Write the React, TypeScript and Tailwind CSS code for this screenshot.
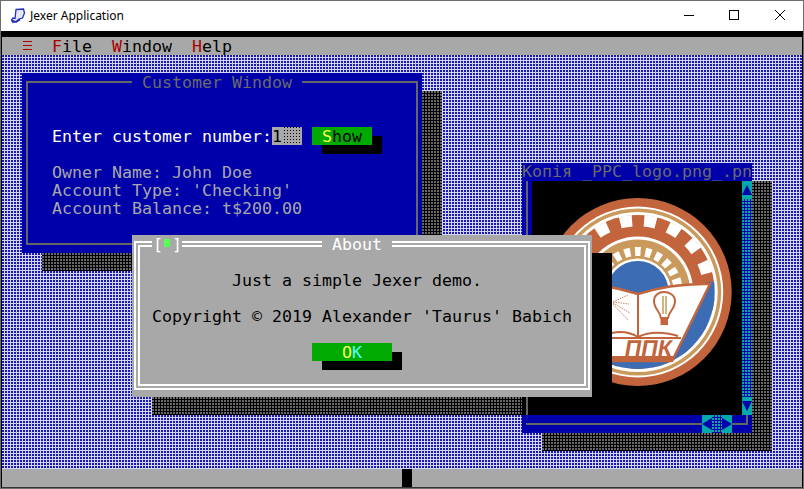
const mono = "font-['DejaVu_Sans_Mono',monospace] text-[16.61px] leading-[20px] whitespace-pre";
const desktopBg = 'bg-[conic-gradient(at_2px_2px,#d4d4f4_75%,#1818b4_0)] bg-[length:3px_3px]';
const shadowBg = 'bg-[conic-gradient(at_2px_2px,#000000_75%,#686868_0)] bg-[length:3px_3px]';
const fieldBg = 'bg-[conic-gradient(at_1px_1px,#a8a8a8_75%,#000000_0)] bg-[length:3px_3px]';
const trackBg = 'bg-[conic-gradient(at_2px_2px,#0000aa_75%,#00aaaa_0)] bg-[length:3px_3px]';

function Arrow({ dir }: { dir: 'up' | 'down' | 'left' | 'right' }) {
  const points = {
    up: '5,4 10,14 0,14',
    down: '0,4 10,4 5,14',
    left: '0,9 10,3 10,15',
    right: '10,9 0,3 0,15',
  }[dir];
  return (
    <svg width="10" height="18" viewBox="0 0 10 18" className="block bg-[#00aaaa] shrink-0">
      <polygon points={points} fill="#0000aa" />
    </svg>
  );
}

function Logo() {
  const orange = '#c2653d';
  const tan = '#c99a5b';
  const blue = '#3b6cb4';
  return (
    <svg width="210" height="234" viewBox="532 181 210 234" className="block">
      <defs>
        <clipPath id="innerDisc">
          <circle cx="637.7" cy="292" r="77" />
        </clipPath>
      </defs>
      <circle cx="637.7" cy="292" r="94" fill={orange} />
      <circle cx="637.7" cy="292" r="85.5" fill="#ffffff" />
      <circle cx="637.7" cy="292" r="83.5" fill={tan} />
      <circle cx="637.7" cy="292" r="80" fill="#ffffff" />
      <circle cx="637.7" cy="292" r="77" fill={orange} />
      {/* gear gaps */}
      <circle
        cx="637.7"
        cy="292"
        r="71.5"
        fill="none"
        stroke="#ffffff"
        strokeWidth="11.5"
        strokeDasharray="12 12.96"
        strokeDashoffset="-6.5"
        transform="rotate(-90 637.7 292)"
      />
      <circle cx="637.7" cy="292" r="55.5" fill="#ffffff" />
      <circle cx="637.7" cy="292" r="52.5" fill={tan} />
      <circle
        cx="637.7"
        cy="292"
        r="40.5"
        fill="none"
        stroke="#ffffff"
        strokeWidth="9"
        strokeDasharray="6 4.6"
        strokeDashoffset="3"
        transform="rotate(-90 637.7 292)"
      />
      <circle cx="637.7" cy="292" r="33.5" fill="#ffffff" />
      <circle cx="637.7" cy="292" r="31" fill={blue} />
      {/* lower blue part */}
      <path d="M540 292 L638 294 L716 281 L730 400 L540 400 Z" fill={blue} clipPath="url(#innerDisc)" />
      {/* open book banner */}
      <path
        d="M560 283 Q600 282 638 294 Q672 283 710 284 L672 361 L560 361 Z"
        fill="#ffffff"
        stroke={orange}
        strokeWidth="2.5"
      />
      <path d="M638 294 L638 336" stroke={orange} strokeWidth="2" />
      <path d="M612 333 Q626 330 638 337 Q654 329 678 336" fill="none" stroke={orange} strokeWidth="2" />
      <path d="M600 338 L681 338" stroke={orange} strokeWidth="2" />
      <path d="M600 358.5 L673 358.5" stroke={orange} strokeWidth="5" />
      <text
        x="671"
        y="356"
        textAnchor="end"
        fontFamily="'Liberation Sans', sans-serif"
        fontWeight="700"
        fontSize="23"
        fill={orange}
        transform="skewX(-10) translate(62.5 0)"
      >
        ППК
      </text>
      {/* bulb */}
      <path
        d="M661 318 C660 311 654 309 654 301 C654 295 659 292 664 292 C669 292 675 295 675 301 C675 309 669 311 668 318 Z"
        fill="#ffffff"
        stroke={orange}
        strokeWidth="2"
      />
      <path d="M663 296 L663 314 M666 296 L666 314" stroke={tan} strokeWidth="1.5" />
      <rect x="660.5" y="318" width="7.5" height="7" fill={orange} />
      {/* rays */}
      <path
        d="M613 302 L628 295 M613 302 L629 304 M613 303 L630 313 M613 304 L628 320"
        stroke={orange}
        strokeWidth="0.8"
        strokeDasharray="1.5 1"
      />
    </svg>
  );
}

export default function App() {
  return (
    <div className="w-[804px] h-[489px] overflow-hidden flex flex-col bg-black border border-[#6e6e6e]">
      {/* Windows title bar */}
      <div className="h-[30px] shrink-0 bg-white flex items-center text-black">
        <svg width="16" height="16" viewBox="0 0 16 16" className="ml-[9px] mr-[4px]">
          <path d="M6 1.5 L13.5 1 L14.5 5 L12.5 10 L9 11 L7 13 L3 14.5 L1.5 12 L3 10 L5 10.5 Z" fill="#e4e6f2" stroke="#2231b8" strokeWidth="1.3" />
          <path d="M2 12.5 L6 14 L10 11.5" fill="none" stroke="#2231b8" strokeWidth="1.8" />
        </svg>
        <span className="font-['Noto_Sans',sans-serif] text-[12px] leading-none">Jexer Application</span>
        <div className="ml-auto flex items-center h-full">
          <svg width="46" height="30" viewBox="0 0 46 30">
            <path d="M19 14.5 H29" stroke="#000" />
          </svg>
          <svg width="46" height="30" viewBox="0 0 46 30">
            <rect x="18.5" y="9.5" width="9" height="9" fill="none" stroke="#000" />
          </svg>
          <svg width="46" height="30" viewBox="0 0 46 30">
            <path d="M18 9 L28 19 M28 9 L18 19" stroke="#000" />
          </svg>
        </div>
      </div>
      <div className="h-[6px] shrink-0 bg-black" />

      {/* Terminal area */}
      <div className={`${mono} flex-1 flex flex-col pl-px pr-px bg-black`}>
        <div className="h-[18px] shrink-0 bg-[#a8a8a8] text-black flex">
          <svg width="10" height="18" viewBox="0 0 10 18" className="ml-[20px] shrink-0">
            <path d="M1 4.5 H10 M1 8.5 H10 M1 12.5 H10" stroke="#aa0000" />
          </svg>
          <span className="ml-[20px] h-[18px]"><span className="text-[#aa0000]">F</span>ile</span>
          <span className="ml-[20px] h-[18px]"><span className="text-[#aa0000]">W</span>indow</span>
          <span className="ml-[20px] h-[18px]"><span className="text-[#aa0000]">H</span>elp</span>
        </div>

        {/* Desktop */}
        <div className={`relative flex-1 overflow-hidden ${desktopBg}`}>
          {/* Customer window */}
          <div className={`absolute left-[420px] top-[36px] w-[20px] h-[180px] ${shadowBg}`} />
          <div className={`absolute left-[40px] top-[198px] w-[380px] h-[18px] ${shadowBg}`} />
          <div className="absolute left-[20px] top-[18px] w-[400px] h-[180px] bg-[#0000aa]">
            <div className="absolute left-[4px] top-[8px] w-[392px] h-[164px] border-2 border-[#666666]" />
            <div className="absolute left-[110px] top-0 w-[170px] h-[18px] text-center bg-[#0000aa] text-[#6a6a6a]">Customer Window</div>
            <div className="relative pl-[30px] pt-[54px] flex h-[72px] text-white">
              <span className="h-[18px]">Enter customer number:</span>
              <span className={`w-[30px] h-[18px] ${fieldBg}`}>
                <span className="block w-[10px] h-[18px] bg-[#a8a8a8] text-black">1</span>
              </span>
              <span className="relative ml-[10px] w-[60px] h-[18px]">
                <span className="absolute left-[10px] top-[9px] w-[60px] h-[18px] bg-black" />
                <span className="relative block h-[18px] pl-[10px] bg-[#00aa00] text-black">
                  <span className="text-[#ffff55]">S</span>how
                </span>
              </span>
            </div>
            <div className="relative pl-[30px] pt-[18px] text-[#a8a8a8]">
              <div className="h-[18px]">Owner Name: John Doe</div>
              <div className="h-[18px]">Account Type: 'Checking'</div>
              <div className="h-[18px]">Account Balance: t$200.00</div>
            </div>
          </div>

          {/* Image window */}
          <div className={`absolute left-[750px] top-[126px] w-[20px] h-[270px] ${shadowBg}`} />
          <div className={`absolute left-[540px] top-[378px] w-[210px] h-[18px] ${shadowBg}`} />
          <div className="absolute left-[520px] top-[108px] w-[230px] h-[270px] bg-[#0000aa] flex flex-col">
            <div className="h-[18px] leading-[18px] text-[#6a6a6a]">Копія _PPC_logo.png_.pn</div>
            <div className="flex h-[234px]">
              <div className="w-[10px] pl-[4px]">
                <div className="w-[2px] h-full bg-[#666666]" />
              </div>
              <div className="w-[210px] h-[234px] bg-black overflow-hidden">
                <Logo />
              </div>
              <div className="w-[10px] flex flex-col">
                <Arrow dir="up" />
                <div className={`flex-1 ${trackBg}`} />
                <Arrow dir="down" />
              </div>
            </div>
            <div className="relative h-[18px] flex justify-end pr-[20px]">
              <div className="absolute left-[4px] top-[8px] w-[176px] h-[2px] bg-[#666666]" />
              <div className="absolute right-[4px] top-0 w-[2px] h-[10px] bg-[#666666]" />
              <div className="absolute left-[210px] top-[8px] w-[16px] h-[2px] bg-[#666666]" />
              <div className="relative flex">
                <Arrow dir="left" />
                <div className={`w-[10px] h-[18px] ${trackBg}`} />
                <Arrow dir="right" />
              </div>
            </div>
          </div>

          {/* About dialog */}
          <div className="absolute left-[590px] top-[198px] w-[20px] h-[144px] bg-black" />
          <div className={`absolute left-[150px] top-[342px] w-[370px] h-[18px] ${shadowBg}`} />
          <div className="absolute left-[520px] top-[342px] w-[90px] h-[18px] bg-black">
            <div className="ml-[4px] w-[2px] h-full bg-[#666666]" />
          </div>
          <div className="absolute left-[130px] top-[180px] w-[460px] h-[162px] bg-[#a8a8a8] text-black">
            <div className="absolute left-[2px] top-[6px] w-[456px] h-[149px] border-2 border-white" />
            <div className="absolute left-[6px] top-[10px] w-[448px] h-[141px] border-2 border-white" />
            <div className="absolute left-[20px] top-0 w-[30px] h-[18px] bg-[#a8a8a8] text-white flex">
              <span className="ml-[1px] h-[18px]">[</span>
              <span className="ml-[1px] mt-[4px] w-[7px] h-[8px] bg-[#55ff55]" />
              <span className="ml-[2px] h-[18px]">]</span>
            </div>
            <div className="absolute left-[190px] top-0 w-[70px] h-[18px] bg-[#a8a8a8] text-white text-center">About</div>
            <div className="relative pt-[36px]">
              <div className="pl-[100px] h-[18px]">Just a simple Jexer demo.</div>
              <div className="pl-[20px] mt-[18px] h-[18px]">Copyright © 2019 Alexander 'Taurus' Babich</div>
              <div className="relative ml-[180px] mt-[18px] w-[80px]">
                <div className="absolute left-[10px] top-[9px] w-[80px] h-[18px] bg-black" />
                <div className="relative h-[18px] bg-[#00aa00] pl-[30px]">
                  <span className="text-[#ffff55]">O</span>
                  <span className="text-[#55ffff]">K</span>
                </div>
              </div>
            </div>
          </div>
        </div>

        {/* Status bar */}
        <div className="h-[18px] shrink-0 bg-[#a8a8a8] flex">
          <div className="ml-[400px] w-[10px] bg-black" />
        </div>
        <div className="h-px shrink-0 bg-[#333333]" />
      </div>
    </div>
  );
}
